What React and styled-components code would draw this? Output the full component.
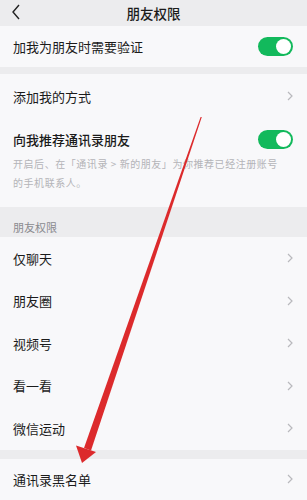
import React from "react";
import styled, { createGlobalStyle } from "styled-components";

const GlobalStyle = createGlobalStyle`
  html, body {
    margin: 0;
    padding: 0;
    background: #ececee;
    font-family: "Noto Sans CJK SC", "Noto Sans", sans-serif;
  }
`;

const Page = styled.div`
  position: relative;
  width: 307px;
  height: 500px;
  overflow: hidden;
  background: #ececee;
  color: #1b1b1b;
`;

const Header = styled.div`
  display: flex;
  align-items: center;
  justify-content: center;
  height: 26px;
  position: relative;
  font-size: 13.5px;
  font-weight: 500;
`;

const Back = styled.svg`
  position: absolute;
  left: 11px;
  top: 4px;
`;

const Group = styled.div`
  background: #f8f8fa;
  margin-top: ${(p) => p.$gap || 0}px;
`;

const Row = styled.div`
  display: flex;
  align-items: center;
  justify-content: space-between;
  height: ${(p) => p.$h || 42.5}px;
  padding: 0 14px 0 13px;
  font-size: 13px;
`;

const Block = styled.div`
  padding: 12px 14px 15px 13px;
`;

const BlockTop = styled.div`
  display: flex;
  align-items: center;
  justify-content: space-between;
  font-size: 13px;
  font-weight: 500;
`;

const Desc = styled.div`
  margin-top: 5px;
  font-size: 10px;
  line-height: 19px;
  letter-spacing: 0.55px;
  color: #b4b4b8;
  width: 272px;
`;

const SectionTitle = styled.div`
  height: 30px;
  display: flex;
  align-items: center;
  padding-left: 13px;
  padding-top: 10px;
  box-sizing: border-box;
  font-size: 11px;
  color: #8a8a8e;
`;

const Toggle = styled.div`
  width: 35px;
  height: 19px;
  border-radius: 10px;
  background: #12b95c;
  position: relative;
  &::after {
    content: "";
    position: absolute;
    right: 2px;
    top: 2px;
    width: 15px;
    height: 15px;
    border-radius: 50%;
    background: #fff;
  }
`;

const Chevron = () => (
  <svg width="6" height="10" viewBox="0 0 6 10">
    <path d="M1 1l4 4-4 4" fill="none" stroke="#b9b9bd" strokeWidth="1.2" />
  </svg>
);

const Arrow = styled.svg`
  position: absolute;
  left: 0;
  top: 0;
  pointer-events: none;
`;

const items = ["仅聊天", "朋友圈", "视频号", "看一看", "微信运动"];

export default function App() {
  return (
    <Page>
      <GlobalStyle />
      <Header>
        <Back width="10" height="16" viewBox="0 0 10 16">
          <path d="M8 1L2 8l6 7" fill="none" stroke="#222" strokeWidth="1.4" />
        </Back>
        朋友权限
      </Header>
      <Group>
        <Row $h={41}>
          加我为朋友时需要验证
          <Toggle />
        </Row>
      </Group>
      <Group $gap={7}>
        <Row $h={44}>
          添加我的方式
          <Chevron />
        </Row>
        <Block>
          <BlockTop>
            向我推荐通讯录朋友
            <Toggle />
          </BlockTop>
          <Desc>开启后、在「通讯录 &gt; 新的朋友」为你推荐已经注册账号的手机联系人。</Desc>
        </Block>
      </Group>
      <SectionTitle>朋友权限</SectionTitle>
      <Group>
        {items.map((t) => (
          <Row key={t}>
            {t}
            <Chevron />
          </Row>
        ))}
      </Group>
      <Group $gap={9}>
        <Row $h={41}>
          通讯录黑名单
          <Chevron />
        </Row>
      </Group>
      <Arrow width="307" height="500" viewBox="0 0 307 500">
        <path d="M201.8 117 L200.6 117 L84 448 L91 450.5 Z" fill="#dc2a2c" />
        <path d="M82 463 L76 445.5 L96 452 Z" fill="#dc2a2c" />
      </Arrow>
    </Page>
  );
}
